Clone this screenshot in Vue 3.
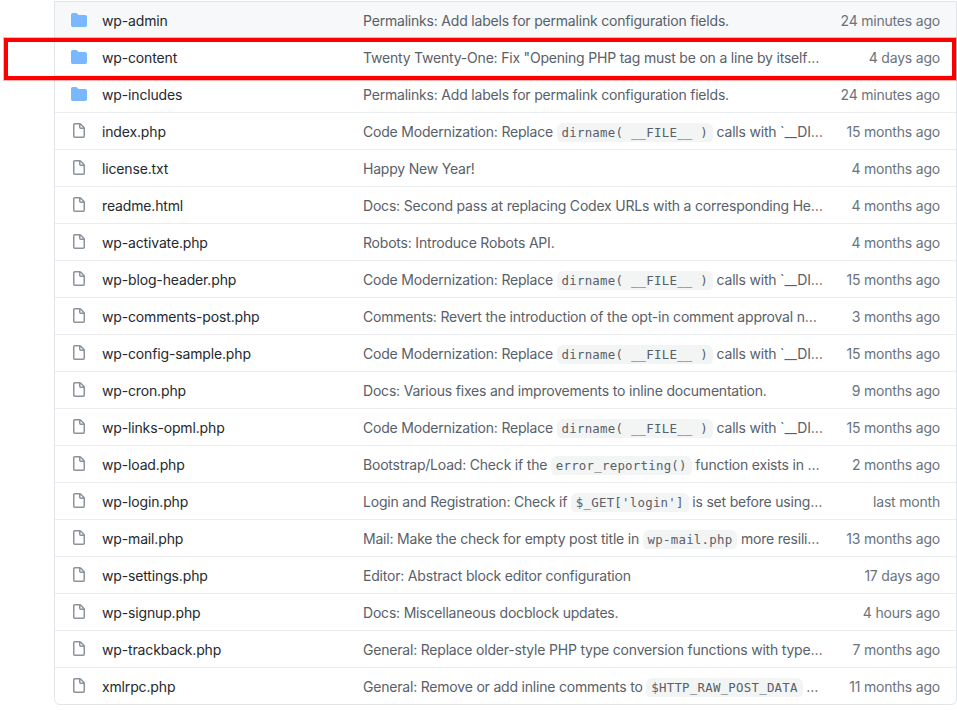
<script setup>
const rows = [
  { n: 'wp-admin', d: 1, m: ['Permalinks: Add labels for permalink configuration fields.'], a: '24 minutes ago', hover: true },
  { n: 'wp-content', d: 1, m: ['Twenty Twenty-One: Fix "Opening PHP tag must be on a line by itself" coding standards violation'], a: '4 days ago' },
  { n: 'wp-includes', d: 1, m: ['Permalinks: Add labels for permalink configuration fields.'], a: '24 minutes ago' },
  { n: 'index.php', m: ['Code Modernization: Replace ', { c: 'dirname( __FILE__ )' }, ' calls with `__DIR__` magic constant'], a: '15 months ago' },
  { n: 'license.txt', m: ['Happy New Year!'], a: '4 months ago' },
  { n: 'readme.html', m: ['Docs: Second pass at replacing Codex URLs with a corresponding HelpHub link'], a: '4 months ago' },
  { n: 'wp-activate.php', m: ['Robots: Introduce Robots API.'], a: '4 months ago' },
  { n: 'wp-blog-header.php', m: ['Code Modernization: Replace ', { c: 'dirname( __FILE__ )' }, ' calls with `__DIR__` magic constant'], a: '15 months ago' },
  { n: 'wp-comments-post.php', m: ['Comments: Revert the introduction of the opt-in comment approval notification'], a: '3 months ago' },
  { n: 'wp-config-sample.php', m: ['Code Modernization: Replace ', { c: 'dirname( __FILE__ )' }, ' calls with `__DIR__` magic constant'], a: '15 months ago' },
  { n: 'wp-cron.php', m: ['Docs: Various fixes and improvements to inline documentation.'], a: '9 months ago' },
  { n: 'wp-links-opml.php', m: ['Code Modernization: Replace ', { c: 'dirname( __FILE__ )' }, ' calls with `__DIR__` magic constant'], a: '15 months ago' },
  { n: 'wp-load.php', m: ['Bootstrap/Load: Check if the ', { c: 'error_reporting()' }, ' function exists in the bootstrap file'], a: '2 months ago' },
  { n: 'wp-login.php', m: ['Login and Registration: Check if ', { c: "$_GET['login']" }, ' is set before using it in the login form'], a: 'last month' },
  { n: 'wp-mail.php', m: ['Mail: Make the check for empty post title in ', { c: 'wp-mail.php' }, ' more resilient to whitespace'], a: '13 months ago' },
  { n: 'wp-settings.php', m: ['Editor: Abstract block editor configuration'], a: '17 days ago' },
  { n: 'wp-signup.php', m: ['Docs: Miscellaneous docblock updates.'], a: '4 hours ago' },
  { n: 'wp-trackback.php', m: ['General: Replace older-style PHP type conversion functions with type casts'], a: '7 months ago' },
  { n: 'xmlrpc.php', m: ['General: Remove or add inline comments to ', { c: '$HTTP_RAW_POST_DATA' }, ' checks and assignments'], a: '11 months ago' },
]
</script>

<template>
  <div class="page">
    <div class="box">
      <div v-for="r in rows" :key="r.n" class="row" :class="{ hover: r.hover }">
        <svg v-if="r.d" class="icon" viewBox="0 0 16 16" width="16" height="16">
          <path fill="#79b8ff" d="M1.75 1A1.75 1.75 0 0 0 0 2.75v10.5C0 14.216.784 15 1.75 15h12.5A1.75 1.75 0 0 0 16 13.25v-8.5A1.75 1.75 0 0 0 14.25 3H7.5a.25.25 0 0 1-.2-.1l-.9-1.2C6.07 1.26 5.55 1 5 1H1.75z" />
        </svg>
        <svg v-else class="icon" viewBox="0 0 16 16" width="16" height="16">
          <path fill="#8b939c" fill-rule="evenodd" d="M3.75 1.5a.25.25 0 0 0-.25.25v11.5c0 .138.112.25.25.25h8.5a.25.25 0 0 0 .25-.25V6H9.75A1.75 1.75 0 0 1 8 4.25V1.5H3.75zm5.75.56v2.19c0 .138.112.25.25.25h2.19L9.5 2.06zM2 1.75C2 .784 2.784 0 3.75 0h5.086c.464 0 .909.184 1.237.513l3.414 3.414c.329.328.513.773.513 1.237v8.086A1.75 1.75 0 0 1 12.25 15h-8.5A1.75 1.75 0 0 1 2 13.25V1.75z" />
        </svg>
        <span class="name">{{ r.n }}</span>
        <span class="msg"><template v-for="(p, i) in r.m" :key="i"><code v-if="p.c">{{ p.c }}</code><template v-else>{{ p }}</template></template></span>
        <span class="age">{{ r.a }}</span>
      </div>
      <div class="mark"></div>
    </div>
  </div>
</template>

<style>
html, body { background: #fff; }
</style>

<style scoped>
.page {
  width: 957px;
  height: 710px;
  overflow: hidden;
  padding: 1px 0 0 54px;
  box-sizing: border-box;
  background: #fff;
  font-family: Inter, "Liberation Sans", sans-serif;
  font-size: 14px;
}
.box {
  position: relative;
  width: 903px;
  box-sizing: border-box;
  border: 1px solid #e1e4e8;
  border-radius: 0 0 6px 6px;
}
.row {
  height: 37px;
  box-sizing: border-box;
  display: flex;
  align-items: center;
  padding: 0 16px;
  border-top: 1px solid #eaecef;
}
.row:first-child { height: 36px; border-top: 0; }
.hover { background: #f6f8fa; }
.icon { flex: none; margin-right: 15px; }
.name { flex: none; width: 261px; color: #24292e; letter-spacing: -0.15px; }
.msg {
  flex: none;
  width: 460px;
  line-height: 21px;
  color: #586069;
  letter-spacing: -0.2px;
  white-space: nowrap;
  overflow: hidden;
  text-overflow: ellipsis;
}
.age {
  flex: 1;
  text-align: right;
  color: #6a737d;
  letter-spacing: -0.2px;
  white-space: nowrap;
}
code {
  font-family: "DejaVu Sans Mono", "Liberation Mono", monospace;
  font-size: 12.4px;
  line-height: 1;
  vertical-align: -1px;
  letter-spacing: 0.25px;
  padding: 2.4px 4.8px;
  background: rgba(27, 31, 35, 0.05);
  border-radius: 6px;
}
.mark {
  position: absolute;
  left: -51px;
  top: 36px;
  width: 952px;
  height: 42px;
  box-sizing: border-box;
  border: 4px solid #f00;
  box-shadow: 0 0 0 1px rgba(255, 0, 0, 0.3);
  pointer-events: none;
}
</style>
